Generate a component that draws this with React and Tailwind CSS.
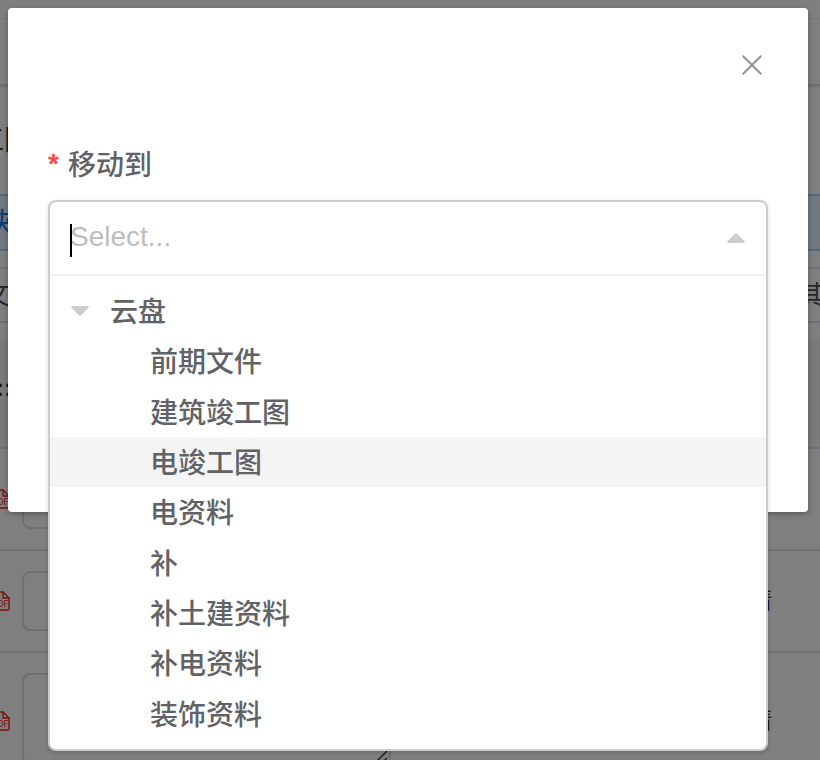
import { useState } from 'react';

const FOLDERS = [
  '前期文件',
  '建筑竣工图',
  '电竣工图',
  '电资料',
  '补',
  '补土建资料',
  '补电资料',
  '装饰资料',
];

function PdfIcon() {
  return (
    <svg className="-ml-2 h-5 w-[18px] shrink-0 text-[#f0281e]" viewBox="0 0 18 20" fill="none" stroke="currentColor" strokeWidth="1.4">
      <path d="M11 1H2Q1 1 1 2V18Q1 19 2 19H16Q17 19 17 18V7L11 1V7H17" />
      <text x="0" y="15.5" fontSize="9" fontFamily="Roboto, sans-serif" fill="currentColor" stroke="none">PDF</text>
    </svg>
  );
}

function FileRow({ boxClass, iconClass, noteClass, rowClass, name, note, grip }) {
  return (
    <div className={`flex items-start border-b-2 border-[#dfe6ec] ${rowClass}`}>
      <div className={`w-[22px] shrink-0 ${iconClass}`}>
        <PdfIcon />
      </div>
      <div className="relative w-[369px] shrink-0">
        <textarea
          aria-label={name}
          className={`block w-full resize-none rounded-lg border-2 border-[#dcdfe6] bg-white ${boxClass}`}
        />
        {grip && (
          <svg className="absolute right-[3px] bottom-[3px] h-3 w-3" viewBox="0 0 12 12" stroke="#444" strokeWidth="1.5">
            <path d="M1 11L11 1M8 11L11 8" />
          </svg>
        )}
      </div>
      <span className={`ml-auto pr-12 text-[24px] leading-8 text-[#303133] ${noteClass}`}>{note}</span>
    </div>
  );
}

function FilePage() {
  return (
    <div className="h-full bg-white">
      <div className="h-[19px] border-b border-[#f2f2f2]" />
      <div className="h-[67px] border-b-2 border-[#dcdfe6] shadow-sm" />
      <h1 className="-ml-6 pt-[37px] pb-[35px] text-[28px] leading-9 text-[#404145]">工图</h1>
      <div className="h-[57px] border-y-2 border-[#a3d3ff] bg-[#e4f0ff] text-[28px] leading-[56px] text-[#1681ef]">
        <span className="-ml-3">夹</span>
      </div>
      <div className="mt-4 flex h-14 justify-between border-y-2 border-[#dfe3ec] text-[26px] leading-[52px] text-[#505155]">
        <span className="-ml-4">文</span>
        <span className="-mr-1">其</span>
      </div>
      <div className="mt-4 h-[110px] border-b-2 border-[#dfe3ec] bg-[#f6f6f6] text-[24px] font-bold leading-[98px] text-[#303150]">
        <span className="-ml-1">::</span>
      </div>
      <FileRow name="文件 1" note="" rowClass="h-[102px] pt-5" boxClass="h-[60px]" iconClass="pt-5" noteClass="pt-[14px]" />
      <FileRow name="文件 2" note="情" rowClass="h-[102px] pt-5" boxClass="h-[60px]" iconClass="pt-5" noteClass="pt-[14px]" />
      <FileRow name="文件 3" note="情" rowClass="h-[132px] pt-5" boxClass="h-[92px]" iconClass="pt-[38px]" noteClass="pt-8" grip />
    </div>
  );
}

function Triangle({ className = '' }) {
  return (
    <svg className={`h-[10px] w-[18px] ${className}`} viewBox="0 0 18 10" fill="#ccc">
      <path d="M1.5 0H16.5Q18.5 .3 17.5 1.8L10 9.3Q9 10.4 8 9.3L.5 1.8Q-.5 .3 1.5 0Z" />
    </svg>
  );
}

export default function App() {
  const [value, setValue] = useState('');
  const [focused, setFocused] = useState('电竣工图');

  return (
    <main className="relative h-screen overflow-hidden font-['Liberation_Sans','Noto_Sans_CJK_SC',sans-serif]">
      <FilePage />
      <div className="absolute inset-0 bg-black/50 pt-2 pr-3 pl-2">
        <section role="dialog" aria-label="移动到" className="h-[504px] rounded-sm bg-white px-10 pt-10 shadow-[0_2px_6px_rgba(0,0,0,0.3)]">
          <div className="flex justify-end">
            <button type="button" aria-label="关闭" className="p-[7px] pr-[6px]">
              <svg className="h-5 w-5" viewBox="0 0 20 20" stroke="#909399" strokeWidth="2">
                <path d="M.7 .7L19.3 19.3M19.3 .7L.7 19.3" />
              </svg>
            </button>
          </div>

          <label htmlFor="folder" className="mt-16 flex gap-[9px] text-[28px] font-medium leading-10 text-[#606266]">
            <span className="font-bold leading-9 text-[#ff4949]">*</span>
            移动到
          </label>

          <div className="mt-[14px] rounded-lg border-2 border-[#ccc] bg-white text-[28px] shadow-[0_2px_4px_rgba(0,0,0,0.15)]">
            <div className="flex h-[72px] items-center justify-between pr-[21px] pl-[19px]">
              <div className="relative flex-1">
                <input
                  id="folder"
                  value={value}
                  onChange={(e) => setValue(e.target.value)}
                  placeholder="Select..."
                  className="block h-9 w-full bg-transparent pb-[2px] pl-px text-[#606266] outline-none placeholder:text-[#bdbdbd]"
                />
                <span className="absolute top-1 left-px h-[33px] w-[2px] bg-black" />
              </div>
              <Triangle className="rotate-180" />
            </div>

            <div className="border-t-2 border-[#f2f2f2] py-[10px]">
              <ul role="tree" className="grid min-h-[453px] auto-rows-fr font-medium text-[#606266]">
                <li role="treeitem" aria-expanded="true" className="flex items-center pl-[21px]">
                  <button type="button" aria-label="收起">
                    <Triangle />
                  </button>
                  <button type="button" className="ml-[21px] pt-1" onClick={() => setValue('云盘')}>云盘</button>
                </li>
                {FOLDERS.map((name) => (
                  <li
                    key={name}
                    role="treeitem"
                    onMouseEnter={() => setFocused(name)}
                    className={`flex items-center pt-1 pl-[100px] ${focused === name ? 'bg-[#f4f4f4]' : ''}`}
                  >
                    <button type="button" onClick={() => setValue(name)}>{name}</button>
                  </li>
                ))}
              </ul>
            </div>
          </div>
        </section>
      </div>
    </main>
  );
}
